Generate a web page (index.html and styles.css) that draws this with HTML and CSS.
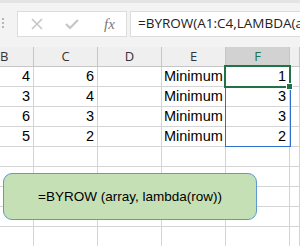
FILE: index.html
```html
<!DOCTYPE html>
<html lang="en">
<head>
    <meta charset="UTF-8">
    <title>BYROW</title>
    <link rel="stylesheet" href="styles.css">
</head>
<body>

    <div class="toolbar">
        <div class="grip"><span></span><span></span><span></span></div>
        <div class="fx-box">
            <svg class="icon" width="12" height="12" viewBox="0 0 12 12"><path d="M1 1 L11 11 M11 1 L1 11" stroke="#c6c6c6" stroke-width="1.6" fill="none"/></svg>
            <svg class="icon" width="14" height="12" viewBox="0 0 14 12"><path d="M1 6 L5 10 L13 2" stroke="#c6c6c6" stroke-width="2.2" fill="none"/></svg>
            <span class="fx">fx</span>
        </div>
        <div class="formula">=BYROW(A1:C4,LAMBDA(a</div>
    </div>

    <div class="sheet">
        <div class="grid">
            <div class="head">B</div><div class="head">C</div><div class="head">D</div><div class="head">E</div><div class="head selected">F</div><div class="head"></div>

            <div class="cell num">4</div><div class="cell num">6</div><div class="cell"></div><div class="cell">Minimum</div><div class="cell num">1</div><div class="cell"></div>
            <div class="cell num">3</div><div class="cell num">4</div><div class="cell"></div><div class="cell">Minimum</div><div class="cell num">3</div><div class="cell"></div>
            <div class="cell num">6</div><div class="cell num">3</div><div class="cell"></div><div class="cell">Minimum</div><div class="cell num">3</div><div class="cell"></div>
            <div class="cell num">5</div><div class="cell num">2</div><div class="cell"></div><div class="cell">Minimum</div><div class="cell num">2</div><div class="cell"></div>
            <div class="cell"></div><div class="cell"></div><div class="cell"></div><div class="cell"></div><div class="cell"></div><div class="cell"></div>
            <div class="cell"></div><div class="cell"></div><div class="cell"></div><div class="cell"></div><div class="cell"></div><div class="cell"></div>
            <div class="cell"></div><div class="cell"></div><div class="cell"></div><div class="cell"></div><div class="cell"></div><div class="cell"></div>
            <div class="cell"></div><div class="cell"></div><div class="cell"></div><div class="cell"></div><div class="cell"></div><div class="cell"></div>
            <div class="cell"></div><div class="cell"></div><div class="cell"></div><div class="cell"></div><div class="cell"></div><div class="cell"></div>
        </div>

        <!-- selection over the grid -->
        <div class="spill"></div>
        <div class="active"></div>
        <div class="fill-handle"></div>

        <div class="shape">=BYROW (array, lambda(row))</div>
    </div>

</body>
</html>
```

FILE: styles.css
```css
* { box-sizing: border-box; margin: 0; padding: 0; }
body {
    width: 300px;
    height: 246px;
    overflow: hidden;
    background: #fff;
    font-family: "Liberation Sans", Arial, sans-serif;
}
.toolbar {
    height: 47px;
    display: flex;
    align-items: flex-start;
    background: #f3f3f3;
    border-top: 3px solid #e4e4e4;
    padding-top: 8px;
}
.grip {
    width: 17px;
    display: flex;
    flex-direction: column;
    gap: 2px;
    padding: 7px 0 0 2px;
}
.grip span {
    width: 2px;
    height: 2px;
    background: #b5b5b5;
}
.fx-box {
    width: 110px;
    height: 26px;
    background: #fff;
    border: 1px solid #dcdcdc;
    display: flex;
    align-items: center;
    padding-left: 13px;
    gap: 22px;
}
.fx {
    font-family: "Liberation Serif", serif;
    font-style: italic;
    font-size: 15px;
    color: #7a7a7a;
    margin-left: 3px;
}
.formula {
    flex: 1;
    height: 26px;
    margin-left: 3px;
    background: #fff;
    border: 1px solid #dcdcdc;
    border-right: none;
    padding-left: 7px;
    font-family: "Open Sans", sans-serif;
    font-size: 13.5px;
    line-height: 23px;
    color: #222;
    white-space: nowrap;
    overflow: hidden;
}
.sheet {
    position: relative;
}
.grid {
    display: grid;
    grid-template-columns: 34px 64px 64px 64px 64px 10px;
    grid-auto-rows: 20px;
}
.head {
    background: #efefef;
    border-right: 1px solid #c6c6c6;
    border-bottom: 1px solid #c6c6c6;
    text-align: center;
    font-family: "Open Sans", sans-serif;
    font-size: 13px;
    line-height: 19px;
    color: #333;
}
.head:first-child { text-align: left; }
.head.selected {
    background: #d2d2d2;
    color: #217346;
}
.cell {
    border-right: 1px solid #d4d4d4;
    border-bottom: 1px solid #d4d4d4;
    font-size: 14.5px;
    line-height: 19px;
    padding: 0 3px 0 2px;
    color: #000;
    white-space: nowrap;
}
.num { text-align: right; }
.spill {
    position: absolute;
    left: 225px;
    top: 18px;
    width: 66px;
    height: 82px;
    border: 1px solid #2f6fd0;
}
.active {
    position: absolute;
    left: 224px;
    top: 18px;
    width: 67px;
    height: 23px;
    border: 2px solid #217346;
}
.fill-handle {
    position: absolute;
    left: 286px;
    top: 36px;
    width: 7px;
    height: 7px;
    background: #217346;
    border: 1px solid #fff;
}
.shape {
    position: absolute;
    left: 3px;
    top: 126px;
    width: 254px;
    height: 47px;
    background: #c5e0b4;
    border: 1px solid #5b9bd5;
    border-radius: 9px;
    display: flex;
    align-items: center;
    justify-content: center;
    font-size: 13.5px;
    color: #000;
}
```
